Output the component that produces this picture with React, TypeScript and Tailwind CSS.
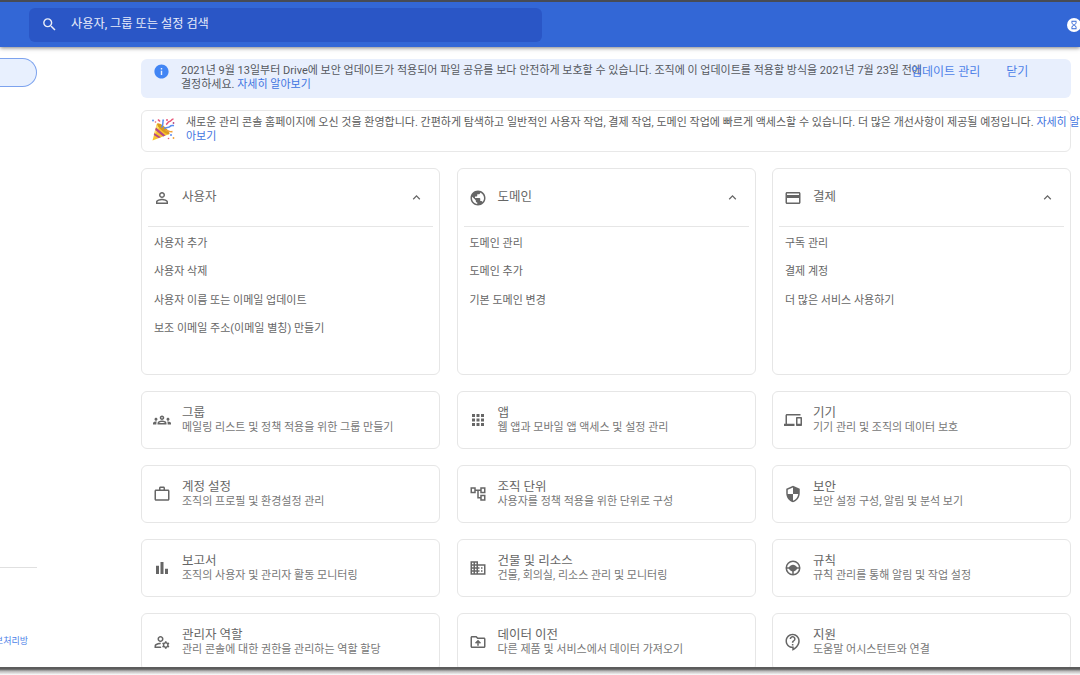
import React from "react";
import {
  MdAccessTime,
  MdApps,
  MdBarChart,
  MdCreditCard,
  MdDevices,
  MdDomain,
  MdHourglassEmpty,
  MdInfo,
  MdKeyboardArrowUp,
  MdOutlineAccountTree,
  MdOutlineContactSupport,
  MdOutlineDriveFolderUpload,
  MdOutlineGroups,
  MdOutlineManageAccounts,
  MdPersonOutline,
  MdPublic,
  MdSearch,
  MdSecurity,
  MdWorkOutline,
} from "react-icons/md";

type IconType = React.ComponentType<{ className?: string }>;

const WheelIcon: IconType = ({ className }) => (
  <svg viewBox="0 0 24 24" className={className} fill="none">
    <circle cx="12" cy="12" r="9" stroke="currentColor" strokeWidth="2" />
    <path
      d="M3 11h3.5C8 8.6 9.800 7.500 12 7.500s4 1.100 5.500 3.500H21v2h-3.500c-1.200 2.200-2.600 3.200-4.500 3.500V21h-2v-4.500c-1.900-.3-3.300-1.300-4.500-3.500H3z"
      fill="currentColor"
    />
  </svg>
);

const PartyPopper: IconType = ({ className }) => (
  <svg viewBox="0 0 24 24" className={className} fill="none">
    <path d="M6 5.500 18.500 16 1.500 22.500z" fill="#f9c32d" />
    <path d="M6 5.500 9 8l-5.500 9.500-.8-.4z" fill="#ffde68" />
    <path d="m5 9.500 9.500 8-2.300.9L4.200 12zM3.400 15l6.400 4.300-2.200.8-4.800-3z" fill="#b44a86" />
    <ellipse cx="12.300" cy="10.800" rx="2.300" ry="8" transform="rotate(-49 12.300 10.800)" fill="#d99a1f" />
    <path d="M10.500 9.500C13 7 11 4 12.500 1.500" stroke="#5b8def" strokeWidth="1.500" />
    <path d="M13 10.500c2.500-1.500 5-.5 6-2s2.500-1 4-.8" stroke="#5b8def" strokeWidth="1.500" />
    <path d="M15 6.500c2-.5 1.500-3 3.500-3s1.500-2.500 4-2.500" stroke="#e8587a" strokeWidth="1.600" />
    <path d="M14.500 12.500c3-.5 4 2 7 1" stroke="#f0a13a" strokeWidth="1.400" />
    <path d="M7 1.500 9 3.500" stroke="#e8587a" strokeWidth="1.700" />
    <circle cx="2" cy="2.500" r="1" fill="#5b8def" />
    <circle cx="4.500" cy="4" r=".8" fill="#e8587a" />
    <circle cx="16" cy="2" r="1" fill="#e8587a" />
    <circle cx="22.500" cy="5" r=".9" fill="#b44a86" />
    <circle cx="20" cy="17" r="1" fill="#5b8def" />
    <circle cx="22.500" cy="20" r=".9" fill="#f0a13a" />
    <circle cx="17.500" cy="20.500" r=".8" fill="#e8587a" />
  </svg>
);

const MENU_CARDS: { icon: IconType; title: string; links: string[] }[] = [
  {
    icon: MdPersonOutline,
    title: "사용자",
    links: ["사용자 추가", "사용자 삭제", "사용자 이름 또는 이메일 업데이트", "보조 이메일 주소(이메일 별칭) 만들기"],
  },
  { icon: MdPublic, title: "도메인", links: ["도메인 관리", "도메인 추가", "기본 도메인 변경"] },
  { icon: MdCreditCard, title: "결제", links: ["구독 관리", "결제 계정", "더 많은 서비스 사용하기"] },
];

const LINK_CARDS: { icon: IconType; title: string; description: string; large?: boolean }[] = [
  { icon: MdOutlineGroups, title: "그룹", description: "메일링 리스트 및 정책 적용을 위한 그룹 만들기" },
  { icon: MdApps, title: "앱", description: "웹 앱과 모바일 앱 액세스 및 설정 관리" },
  { icon: MdDevices, title: "기기", description: "기기 관리 및 조직의 데이터 보호" },
  { icon: MdWorkOutline, title: "계정 설정", description: "조직의 프로필 및 환경설정 관리" },
  { icon: MdOutlineAccountTree, title: "조직 단위", description: "사용자를 정책 적용을 위한 단위로 구성" },
  { icon: MdSecurity, title: "보안", description: "보안 설정 구성, 알림 및 분석 보기" },
  { icon: MdBarChart, title: "보고서", description: "조직의 사용자 및 관리자 활동 모니터링" },
  { icon: MdDomain, title: "건물 및 리소스", description: "건물, 회의실, 리소스 관리 및 모니터링" },
  { icon: WheelIcon, title: "규칙", description: "규칙 관리를 통해 알림 및 작업 설정" },
  { icon: MdOutlineManageAccounts, title: "관리자 역할", description: "관리 콘솔에 대한 권한을 관리하는 역할 할당" },
  { icon: MdOutlineDriveFolderUpload, title: "데이터 이전", description: "다른 제품 및 서비스에서 데이터 가져오기" },
  { icon: MdOutlineContactSupport, title: "지원", description: "도움말 어시스턴트와 연결" },
];

function Header() {
  return (
    <header className="relative z-10 flex h-[47px] shrink-0 items-center justify-between border-t-2 border-[#474b55] bg-[#3367d6] pl-[29px] shadow-[0_1px_4px_rgba(0,0,0,0.5)]">
      <div className="flex h-[34px] w-[513px] items-center rounded-md bg-[#2a56c6] pl-3 text-white">
        <MdSearch className="h-[17px] w-[17px] opacity-90" />
        <span className="ml-[13px] text-[12.2px] whitespace-nowrap text-white/90">사용자, 그룹 또는 설정 검색</span>
      </div>
      <div className="-mr-px flex h-[14px] w-[14px] items-center justify-center rounded-full bg-white">
        <MdHourglassEmpty className="h-[10px] w-[10px] text-[#3367d6]" />
      </div>
    </header>
  );
}

function Sidebar() {
  return (
    <aside className="flex w-[141px] shrink-0 flex-col">
      <div className="mt-[11px] h-[29px] w-[37px] rounded-r-full border border-l-0 border-[#7da3ee] bg-[#e8f0fe]"></div>
      <div className="mt-[480px] h-px w-[37px] bg-[#e0e0e0]"></div>
      <div className="mt-[65px] flex w-[28px] justify-end overflow-hidden text-[9px] leading-4 whitespace-nowrap text-[#4d7fe8]">
        개인정보처리방
      </div>
    </aside>
  );
}

function Banners() {
  return (
    <>
      <div className="mt-3 flex h-[39px] rounded-md bg-[#e8effd] pl-3 text-[11px]">
        <MdInfo className="mt-[4px] h-[17px] w-[17px] shrink-0 text-[#4285f4]" />
        <p className="mt-[5px] ml-[11px] w-[715px] leading-[14px] whitespace-nowrap text-[#55585d]">
          2021년 9월 13일부터 Drive에 보안 업데이트가 적용되어 파일 공유를 보다 안전하게 보호할 수 있습니다. 조직에 이 업데이트를 적용할 방식을 2021년 7월 23일 전에
          <br />
          결정하세요. <span className="text-[#3f74e0]">자세히 알아보기</span>
        </p>
        <div className="mt-[5px] ml-[15px] flex gap-[26px] text-[12px] leading-4 whitespace-nowrap text-[#4d7fe8]">
          <span>업데이트 관리</span>
          <span>닫기</span>
        </div>
      </div>
      <div className="mt-3 flex h-[42px] rounded-md border border-[#e8e8e8] pl-[9px] text-[11px]">
        <PartyPopper className="mt-[7px] h-6 w-6 shrink-0" />
        <p className="mt-[5px] ml-[11px] leading-[14px] whitespace-nowrap text-[#5c5c5c]">
          새로운 관리 콘솔 홈페이지에 오신 것을 환영합니다. 간편하게 탐색하고 일반적인 사용자 작업, 결제 작업, 도메인 작업에 빠르게 액세스할 수 있습니다. 더 많은 개선사항이 제공될 예정입니다.{" "}
          <span className="text-[#3f74e0]">
            자세히 알<br />
            아보기
          </span>
        </p>
      </div>
    </>
  );
}

export default function App() {
  return (
    <div className="flex h-[675px] w-[1080px] flex-col overflow-hidden bg-white font-[Roboto,'Noto_Sans_CJK_KR',sans-serif] text-[#666]">
      <Header />
      <div className="flex h-[620px] shrink-0 overflow-hidden">
        <Sidebar />
        <main className="w-[930px] shrink-0">
          <Banners />

          <div className="mt-[16px] grid grid-cols-3 gap-x-[16.500px] gap-y-4">
            {MENU_CARDS.map(({ icon: Icon, title, links }) => (
              <section key={title} className="h-[207px] rounded-md border border-[#e6e6e6] px-[6px]">
                <div className="flex h-[58px] items-center border-b border-[#e6e6e6] pr-[9px] pl-[5px]">
                  <Icon className="h-[18px] w-[18px]" />
                  <h2 className="ml-[11px] text-[12.5px]">{title}</h2>
                  <MdKeyboardArrowUp className="ml-auto h-[15px] w-[15px]" />
                </div>
                <ul className="mt-[3px] pl-[6px] text-[11px] leading-[28.400px]">
                  {links.map((link) => (
                    <li key={link}>{link}</li>
                  ))}
                </ul>
              </section>
            ))}

            {LINK_CARDS.map(({ icon: Icon, title, description }) => (
              <section key={title} className="flex h-[58px] items-center rounded-md border border-[#e6e6e6] pl-[11px]">
                <Icon className="h-[18px] w-[18px]" />
                <div className="ml-[11px] whitespace-nowrap">
                  <h2 className="text-[12.5px] leading-[15px]">{title}</h2>
                  <p className="text-[11px] leading-[15px] text-[#777]">{description}</p>
                </div>
              </section>
            ))}
          </div>
        </main>
      </div>
      {/* Window edge and its drop shadow */}
      <div className="h-2 shrink-0 bg-linear-to-b from-[#5c5c5c] from-25% via-[#b5b5b5] via-50% to-white"></div>
    </div>
  );
}
